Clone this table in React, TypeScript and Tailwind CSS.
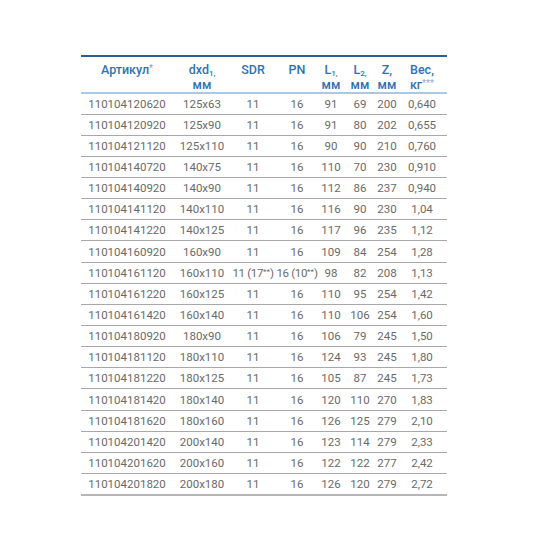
import * as React from "react";

const rows: string[][] = [
  ["110104120620", "125x63", "11", "16", "91", "69", "200", "0,640"],
  ["110104120920", "125x90", "11", "16", "91", "80", "202", "0,655"],
  ["110104121120", "125x110", "11", "16", "90", "90", "210", "0,760"],
  ["110104140720", "140x75", "11", "16", "110", "70", "230", "0,910"],
  ["110104140920", "140x90", "11", "16", "112", "86", "237", "0,940"],
  ["110104141120", "140x110", "11", "16", "116", "90", "230", "1,04"],
  ["110104141220", "140x125", "11", "16", "117", "96", "235", "1,12"],
  ["110104160920", "160x90", "11", "16", "109", "84", "254", "1,28"],
  ["110104161120", "160x110", "11 (17**)", "16 (10**)", "98", "82", "208", "1,13"],
  ["110104161220", "160x125", "11", "16", "110", "95", "254", "1,42"],
  ["110104161420", "160x140", "11", "16", "110", "106", "254", "1,60"],
  ["110104180920", "180x90", "11", "16", "106", "79", "245", "1,50"],
  ["110104181120", "180x110", "11", "16", "124", "93", "245", "1,80"],
  ["110104181220", "180x125", "11", "16", "105", "87", "245", "1,73"],
  ["110104181420", "180x140", "11", "16", "120", "110", "270", "1,83"],
  ["110104181620", "180x160", "11", "16", "126", "125", "279", "2,10"],
  ["110104201420", "200x140", "11", "16", "123", "114", "279", "2,33"],
  ["110104201620", "200x160", "11", "16", "122", "122", "277", "2,42"],
  ["110104201820", "200x180", "11", "16", "126", "120", "279", "2,72"],
];

const widths = ["w-[92px]", "w-[58px]", "w-[44px]", "w-[44px]", "w-[24px]", "w-[34px]", "w-[20px]", "w-[50px]"];

// "11 (17**)" -> small raised asterisks, tighter like the print
function Cell({ v }: { v: string }) {
  if (!v.includes("**")) return <>{v}</>;
  const [a, b] = v.split("**");
  return (
    <span className="tracking-[-0.03em]">
      {a}
      <sup className="text-[8px] -top-[3px] tracking-normal">**</sup>
      {b}
    </span>
  );
}

export default function App() {
  return (
    <div className="w-[547px] h-[547px] bg-white pt-[55px] pl-[81px]" style={{ fontFamily: "Roboto, 'Open Sans', sans-serif" }}>
      <table className="table-fixed border-collapse w-[366px] text-[11.5px] text-[#6a6a6a]">
        <colgroup>
          {widths.map((w, i) => (
            <col key={i} className={w} />
          ))}
        </colgroup>
        <thead>
          <tr className="h-[35px] border-t-2 border-t-[#2c5f95] border-b-2 border-b-[#a9c9e8] text-[#3271b6] text-[12.5px] align-top leading-[15px]">
            <th className="pt-[5px] font-medium whitespace-nowrap">Артикул<sup className="text-[9px] text-[#7fa5d3] -top-[3px]">*</sup></th>
            <th className="pt-[5px] font-medium whitespace-nowrap">
              dxd<sub className="text-[8px]">1,</sub>
              <br />мм
            </th>
            <th className="pt-[5px] font-medium">SDR</th>
            <th className="pt-[5px] font-medium">PN</th>
            <th className="pt-[5px] font-medium whitespace-nowrap">
              L<sub className="text-[8px]">1,</sub>
              <br />мм
            </th>
            <th className="pt-[5px] font-medium whitespace-nowrap">
              L<sub className="text-[8px]">2,</sub>
              <br />мм
            </th>
            <th className="pt-[5px] font-medium whitespace-nowrap">
              Z,<br />мм
            </th>
            <th className="pt-[5px] font-medium whitespace-nowrap">
              Вес,<br />кг<sup className="text-[9px] text-[#8fb1da] -top-[3px]">***</sup>
            </th>
          </tr>
        </thead>
        <tbody>
          {rows.map((r, i) => (
            <tr key={i} className={"h-[21.15px] " + (i === rows.length - 1 ? "border-b-2 border-b-[#b5b5b5]" : "border-b border-b-[#a8a8a8]")}>
              {r.map((c, j) => (
                <td key={j} className="text-center whitespace-nowrap overflow-visible p-0 leading-[14px]">
                  <Cell v={c} />
                </td>
              ))}
            </tr>
          ))}
        </tbody>
      </table>
    </div>
  );
}
